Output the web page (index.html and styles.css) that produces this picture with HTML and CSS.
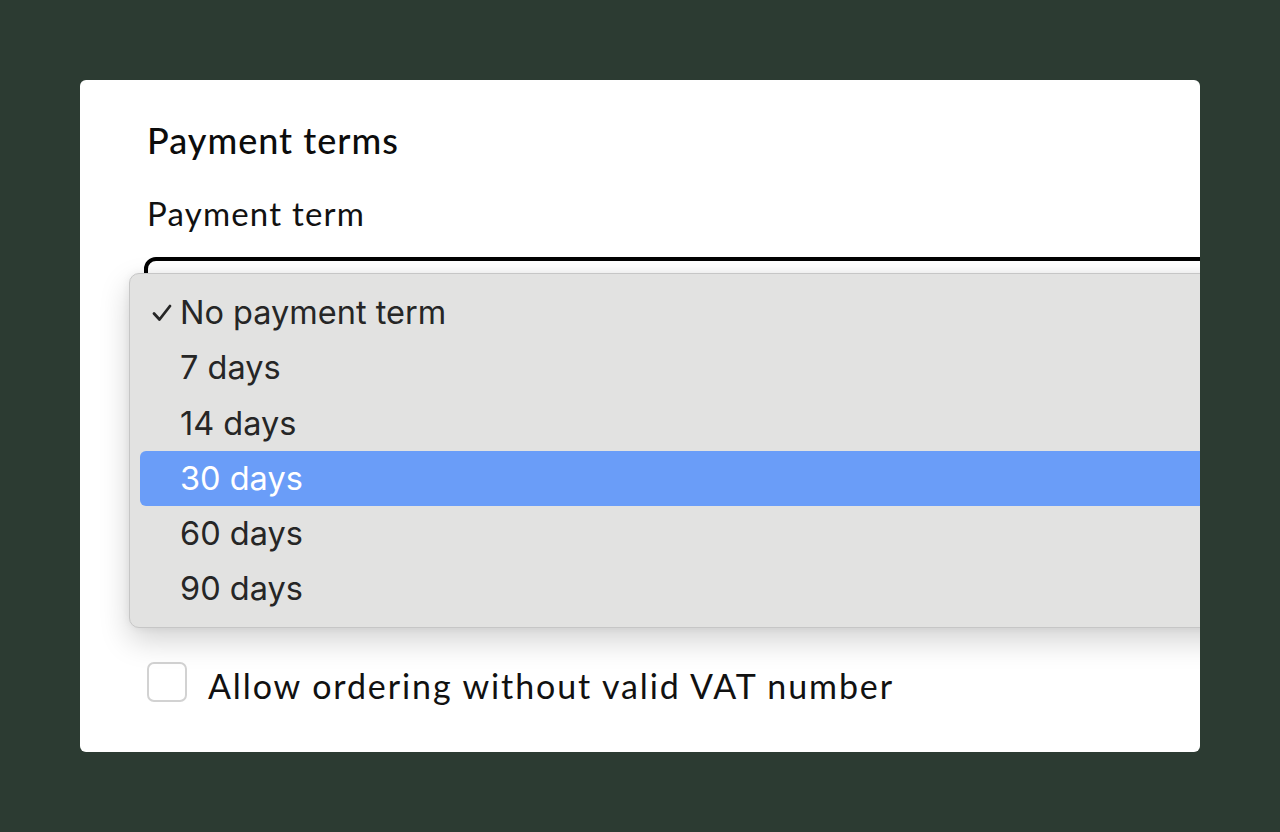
FILE: index.html
```html
<!DOCTYPE html>
<html lang="en">
<head>
<meta charset="utf-8">
<title>Payment terms</title>
<link rel="stylesheet" href="styles.css">
</head>
<body>
<div class="page">
  <section class="card">
    <h2 class="title">Payment terms</h2>
    <label class="field-label">Payment term</label>
    <div class="select"></div>
    <div class="spacer"></div>
    <label class="check-row">
      <span class="checkbox"></span>
      <span class="check-text">Allow ordering without valid VAT number</span>
    </label>
    <ul class="menu">
      <li class="item checked"><svg class="tick" viewBox="0 0 20 18" width="20" height="18"><path d="M2 9.5 L7.5 15.5 L18 2" fill="none" stroke="#262626" stroke-width="2.8" stroke-linecap="round" stroke-linejoin="round"/></svg>No payment term</li>
      <li class="item">7 days</li>
      <li class="item">14 days</li>
      <li class="item active">30 days</li>
      <li class="item">60 days</li>
      <li class="item">90 days</li>
    </ul>
  </section>
</div>
</body>
</html>
```
FILE: styles.css
```css
html, body {
  margin: 0;
  padding: 0;
}
body {
  background: #2c3b32;
  width: 1280px;
  height: 832px;
  overflow: hidden;
}
.page {
  padding: 80px;
}
.card {
  position: relative;
  box-sizing: border-box;
  width: 1120px;
  height: 672px;
  background: #ffffff;
  border-radius: 6px;
  overflow: hidden;
  padding: 38px 0 0 67px;
  font-family: Lato, "Liberation Sans", sans-serif;
  color: #111111;
}
.title {
  margin: 0;
  font-size: 36px;
  font-weight: 500;
  letter-spacing: 1px;
  line-height: 44px;
  color: #0c0c0c;
}
.field-label {
  display: block;
  margin-top: 31px;
  font-size: 33px;
  letter-spacing: 1.2px;
  line-height: 40px;
}
.select {
  margin: 24px 0 0 -3px;
  width: 1200px;
  height: 70px;
  border: 4px solid #000;
  border-radius: 12px;
}
.spacer {
  height: 327px;
}
.check-row {
  display: flex;
  align-items: flex-start;
  gap: 21px;
}
.checkbox {
  box-sizing: border-box;
  width: 40px;
  height: 40px;
  border: 2px solid #d2d2d2;
  border-radius: 7px;
  background: #fff;
}
.check-text {
  margin-top: 4px;
  font-size: 34px;
  letter-spacing: 1.9px;
  line-height: 40px;
}
.menu {
  position: absolute;
  left: 49px;
  top: 193px;
  width: 1200px;
  margin: 0;
  padding: 11px 0 10px 10px;
  list-style: none;
  background: #e2e2e1;
  border: 1px solid #c6c6c6;
  border-radius: 10px;
  box-shadow: 0 12px 30px rgba(0, 0, 0, 0.18), 0 0 8px rgba(0, 0, 0, 0.06);
  font-family: Inter, "Noto Sans", sans-serif;
  font-size: 32.5px;
  color: #262626;
}
.item {
  position: relative;
  height: 55.3px;
  line-height: 55px;
  padding-left: 40px;
  border-radius: 6px;
}
.item.active {
  background: #6a9df8;
  color: #ffffff;
}
.tick {
  position: absolute;
  left: 12px;
  top: 19px;
}
```
